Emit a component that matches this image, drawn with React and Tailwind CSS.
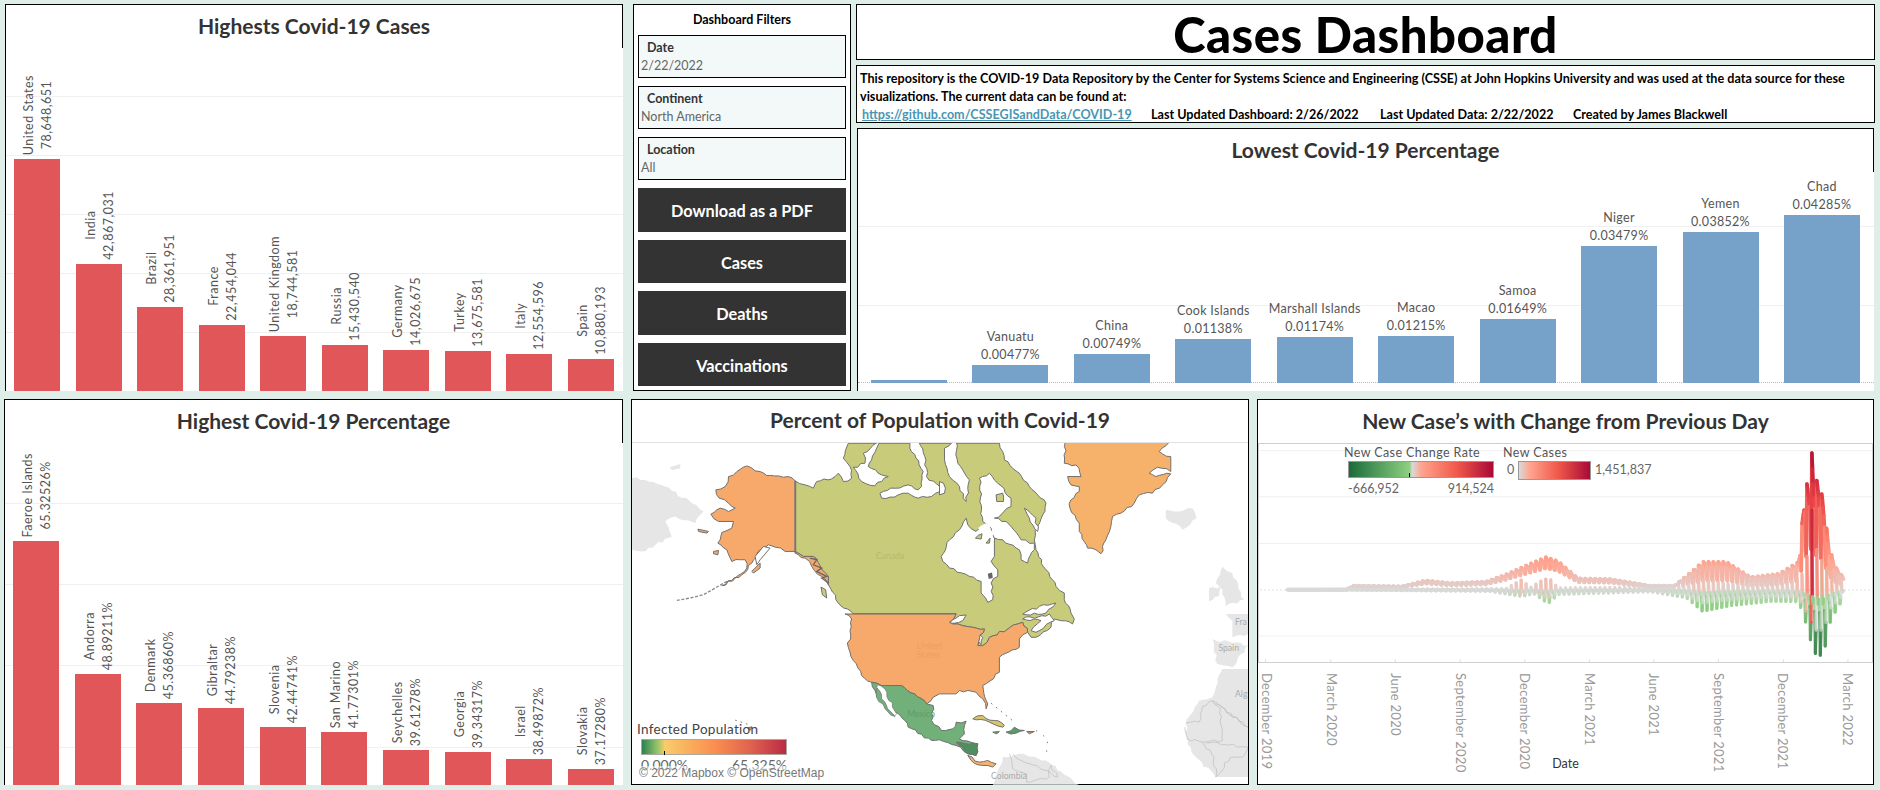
const topCases = [
  ["United States", "78,648,651", 232],
  ["India", "42,867,031", 127],
  ["Brazil", "28,361,951", 84],
  ["France", "22,454,044", 66],
  ["United Kingdom", "18,744,581", 55],
  ["Russia", "15,430,540", 46],
  ["Germany", "14,026,675", 41],
  ["Turkey", "13,675,581", 40],
  ["Italy", "12,554,596", 37],
  ["Spain", "10,880,193", 32],
];

const topPercent = [
  ["Faeroe Islands", "65.32526%", 244],
  ["Andorra", "48.89211%", 111],
  ["Denmark", "45.36860%", 82],
  ["Gibraltar", "44.79238%", 77],
  ["Slovenia", "42.44741%", 58],
  ["San Marino", "41.77301%", 53],
  ["Seychelles", "39.61278%", 35],
  ["Georgia", "39.34317%", 33],
  ["Israel", "38.49872%", 26],
  ["Slovakia", "37.17280%", 16],
];

const lowPercent = [
  ["", "", 3],
  ["Vanuatu", "0.00477%", 18],
  ["China", "0.00749%", 29],
  ["Cook Islands", "0.01138%", 44],
  ["Marshall Islands", "0.01174%", 46],
  ["Macao", "0.01215%", 47],
  ["Samoa", "0.01649%", 64],
  ["Niger", "0.03479%", 137],
  ["Yemen", "0.03852%", 151],
  ["Chad", "0.04285%", 168],
];

const axisLabels = [
  "December 2019", "March 2020", "June 2020", "September 2020", "December 2020",
  "March 2021", "June 2021", "September 2021", "December 2021", "March 2022",
];

const font = "font-['Lato','Noto_Sans',sans-serif]";

function Grid({ lines }) {
  return lines.map((y) => (
    <div key={y} className="absolute left-0 right-0 h-px bg-[#f0f0f0]" style={{ top: y }} />
  ));
}

function RedChart({ rows, lines, height, left }) {
  return (
    <div className={`relative flex items-end justify-between pr-[9px] ${left}`} style={{ height }}>
      <Grid lines={lines} />
      {rows.map(([name, value, h]) => (
        <div key={name} className="relative flex w-[46px] flex-col items-center">
          <div className="mb-[4px] ml-[2px] rotate-180 whitespace-nowrap text-center text-[12.5px] leading-[18px] tracking-[0.5px] text-[#555] [writing-mode:vertical-rl]">
            <div>{name}</div>
            <div>{value}</div>
          </div>
          <div className="w-full bg-[#e15759]" style={{ height: h }} />
        </div>
      ))}
    </div>
  );
}

// break long coast edges into small wobbly steps, straight borders stay straight
function coast(s) {
  const pts = s.split(" ").map((p) => p.split(",").map(Number));
  const out = [];
  pts.forEach(([x, y], i) => {
    const [nx, ny] = pts[(i + 1) % pts.length];
    out.push(`${x},${y}`);
    const dx = nx - x;
    const dy = ny - y;
    if (dx === 0 || dy === 0) return;
    const len = Math.hypot(dx, dy);
    const n = Math.floor(len / 11);
    for (let k = 1; k < n; k++) {
      const h = Math.sin((x + k) * 12.9898 + (y + k) * 78.233) * 43758.5453;
      const w = (h - Math.floor(h) - 0.5) * 9;
      out.push(`${(x + (dx * k) / n - (dy / len) * w).toFixed(1)},${(y + (dy * k) / n + (dx / len) * w).toFixed(1)}`);
    }
  });
  return out.join(" ");
}

// map outlines are traced in 3x pixels, one [dx, dy, points] per zoom crop
function poly(parts) {
  return coast(
    parts
      .map(([dx, dy, s]) =>
        s
          .split(" ")
          .map((p) => {
            const [x, y] = p.split(",").map(Number);
            return `${x + dx},${y + dy}`;
          })
          .join(" ")
      )
      .join(" ")
  );
}

const R = 924;
const D = 513;

function NorthAmerica() {
  const land = { stroke: "#6f6f6f", strokeWidth: 3, strokeLinejoin: "round" };
  const water = { fill: "#fff", ...land };
  const gray = { fill: "#e6e6e6" };
  return (
    <svg viewBox="0 0 1851 1026" className="block h-[342px] w-full">
      {/* grey land outside the selection */}
      <polygon {...gray} points={coast("0,105 40,110 100,130 180,180 215,205 190,240 130,220 100,235 120,280 30,325 0,320")} />
      <polygon {...gray} points="113,72 145,62 145,75 120,80" />
      <polygon {...gray} points={poly([[R, 0, "680,200 720,205 760,195 772,225 730,260 680,225"]])} />
      <polygon {...gray} points={poly([[R, 0, "850,370 880,390 915,470 860,490 850,440 830,420"]])} />
      <polygon {...gray} points={poly([[R, 0, "810,435 845,430 840,460 810,475"]])} />
      <polygon {...gray} points={poly([[R, D, "860,0 927,0 927,60 880,70 880,20"]])} />
      <polygon {...gray} points={poly([[R, D, "820,75 927,95 880,160 835,150"]])} />
      <polygon {...gray} points={poly([[R, D, "850,165 927,165 927,490 830,490 770,430 745,380 740,330 780,260 820,250"]])} />
      <polygon {...gray} points={poly([[R, D, "160,513 190,430 240,420 320,440 420,513"]])} />
      <polyline fill="none" stroke="#bbb" strokeWidth="2" points={poly([[R, D, "740,328 780,325 790,278 820,260 845,285 850,380 790,385 745,375"]])} />
      <polyline fill="none" stroke="#bbb" strokeWidth="2" points={poly([[R, D, "820,262 927,340"]])} />
      <polyline fill="none" stroke="#bbb" strokeWidth="2" points={poly([[R, D, "790,385 825,430 830,490 875,430 910,430 927,400"]])} />
      <polyline fill="none" stroke="#bbb" strokeWidth="2" points={poly([[R, D, "210,420 220,465 262,480 262,505 330,490 335,455 355,490"]])} />

      {/* Canada */}
      <polygon
        fill="#c8cb7a"
        {...land}
        points={poly([
          [0, 0, "490,113 520,125 545,135 555,115 610,100 620,90 635,115 660,105 655,70 635,45 650,0"],
          [R, 0, "180,0 195,50 240,90 270,130 320,180 310,215 295,250 285,290 290,320 320,380 350,430 375,450 375,470 395,510"],
          [R, D, "405,15 400,30 345,15 335,40 290,70 275,70 265,55 250,25 235,30 150,70 130,95 115,95 120,75 135,45 100,40 70,35 40,30 30,25 50,0"],
          [0, 0, "665,513 620,480 590,425 590,400 545,340 515,340 490,325"],
        ])}
      />
      {/* Arctic channels, Hudson Bay, Great Lakes */}
      <polygon {...water} points={coast("665,72 700,60 695,30 745,-5 720,50 710,70 750,95 770,100 730,128 690,115")} />
      <polygon {...water} points={coast("745,150 790,135 830,125 860,140 870,130 875,85 835,15 835,-5 862,-5 880,40 885,100 925,130 925,145 900,160 860,165 830,150 800,155 750,165")} />
      <polygon {...water} points={poly([[R, 0, "15,15 40,-5 50,-5 55,60 90,110 80,175 60,130 30,100 15,50"]])} />
      <polygon {...water} points={poly([[R, 0, "5,340 30,290 60,260 80,225 85,245 110,265 130,250 160,270 165,300 165,340 155,355 175,380 175,400 155,420 160,470 145,478 125,450 125,415 90,400 30,375 10,355"]])} />
      <polygon {...water} points={poly([[R, 0, "130,235 120,105 150,90 175,120 215,165 215,190 185,215 165,225 200,235 245,290 285,300 285,320 265,360 245,350 240,320 190,290 165,285 155,255"]])} />
      <polygon fill="#fff" points={poly([[R, 0, "115,255 140,240 165,270 150,290"]])} />
      <polygon {...water} points={poly([[R, 0, "255,195 290,225 295,265 270,225"]])} />
      <polygon {...water} points={poly([[R, 0, "0,115 12,120 15,150 0,155"]])} />
      <polygon {...water} points={poly([[R, D, "30,28 60,5 80,3 70,20"]])} />
      <polygon {...water} points={poly([[R, D, "70,95 72,60 105,40 130,70 125,92 115,80 110,60 90,55"]])} />
      <polygon {...water} points={poly([[R, 0, "250,513 300,490 350,480 320,510"]])} />
      <polygon {...water} points={poly([[R, D, "250,15 330,0 345,20 290,55 275,50 305,20"]])} />
      <polygon fill="#c8cb7a" {...land} points={poly([[R, 0, "170,155 190,150 192,175 172,175"]])} />
      <polygon fill="#c8cb7a" {...land} points={poly([[R, 0, "108,285 128,272 125,288"]])} />
      <polygon fill="#c8cb7a" {...land} points={poly([[R, 0, "140,300 152,285 150,300"]])} />
      <polygon fill="#666" points={poly([[R, 0, "145,392 158,388 160,405 148,408"]])} />

      {/* Alaska */}
      <polygon
        fill="#f6a96a"
        {...land}
        points={coast("490,113 470,100 440,98 405,97 385,85 345,68 315,85 290,100 280,130 252,140 262,165 290,180 310,195 290,205 265,195 237,213 260,235 305,235 300,255 270,268 258,300 285,320 300,355 340,350 345,375 310,405 270,428 300,412 330,395 360,360 385,320 410,305 430,312 460,325 490,325 515,340 545,340 590,400 590,425 570,400 540,370 520,345 490,330")}
      />
      <line x1="491" y1="113" x2="491" y2="328" stroke="#777" strokeWidth="5" />
      <line x1="665" y1="513" x2="974" y2="513" stroke="#777" strokeWidth="4" />
      <polyline fill="none" stroke="#8a8a8a" strokeWidth="4" strokeDasharray="9 5" points="285,415 250,435 215,455 175,465 135,472" />
      <polygon fill="#f6a96a" {...land} points="198,258 230,265 225,270 200,265" />
      <polygon fill="#f6a96a" {...land} points="245,325 260,322 258,335 245,332" />
      <polygon fill="#f6a96a" {...land} points="360,385 385,360 385,375 365,390" />
      <polyline fill="none" stroke="#666" strokeWidth="4" points="535,345 555,350 545,365 570,375 555,385 585,400 570,405 590,420" />
      <polygon fill="#c8cb7a" {...land} points="568,432 582,440 585,465 572,455" />
      <polygon {...water} points="370,340 395,310 415,315 385,350 375,365" />

      {/* Greenland */}
      <polygon
        fill="#f6b26b"
        {...land}
        points={poly([[R, 0, "378,-3 375,60 410,65 425,100 385,100 395,125 420,130 420,145 395,170 392,195 420,240 420,265 445,315 470,320 485,332 500,290 515,250 520,220 545,210 585,180 600,155 640,150 670,125 695,92 650,100 630,90 655,72 695,85 695,40 660,25 690,-3"]])}
      />

      {/* United States */}
      <polygon
        fill="#f6a96a"
        {...land}
        points={poly([
          [0, D, "640,0 660,15 655,50 650,100 665,140 690,185 720,205 750,215 810,215 850,240 885,270 905,250"],
          [R, D, "0,240 50,240 60,230 110,235 130,255 140,285 145,270 130,215 180,175 180,130 240,100 240,75 265,55 250,25 235,30 150,70 130,95 115,95 120,75 135,45 100,40 70,35 40,30 30,25 50,0"],
        ])}
      />

      {/* Mexico and the Caribbean */}
      <polygon
        fill="#72b07a"
        {...land}
        points={poly([
          [0, D, "720,205 750,215 810,215 850,240 885,270 905,275 900,320 930,350"],
          [R, D, "5,350 40,345 50,325 80,322 75,360 60,375 115,390 110,425 85,420 50,395 0,378"],
          [0, D, "900,380 830,340 820,320 760,270 730,230"],
        ])}
      />
      <polygon {...water} strokeWidth="2" points={poly([[0, D, "738,212 760,225 795,300 790,306 768,285 735,250"]])} />
      <polygon fill="#72b07a" {...land} strokeWidth="2" points={poly([[0, D, "736,222 768,285 790,308 760,285 735,250"]])} />
      <polygon fill="#4f8f5f" {...land} points={poly([[R, D, "50,385 115,390 110,425 85,420"]])} />
      <polygon fill="#f6b26b" {...land} points={poly([[R, D, "85,425 120,445 145,440 170,450 160,460 130,455 95,440"]])} />
      <polygon fill="#d8c56c" {...land} points={poly([[R, D, "100,315 130,305 165,320 195,335 190,340 150,325 110,318"]])} />
      <polygon fill="#5a9a68" {...land} points={poly([[R, D, "200,355 225,340 255,350 230,358"]])} />
      <polygon fill="#5a9a68" {...land} points={poly([[R, D, "160,355 180,353 172,360"]])} />
      <polygon fill="#c98a5a" {...land} points={poly([[R, D, "262,353 285,353 270,360"]])} />
      <polygon fill="#f6a96a" {...land} points="348,855 360,852 356,862" />
      <polyline fill="none" stroke="#777" strokeWidth="3" strokeDasharray="5 12" points="310,832 350,845" />
      <polyline fill="none" stroke="#777" strokeWidth="3" strokeDasharray="5 14" points={`${R + 155},${D + 268} ${R + 225},${D + 325}`} />
      <polyline fill="none" stroke="#777" strokeWidth="3" strokeDasharray="4 22" points={`${R + 290},${D + 350} ${R + 325},${D + 375} ${R + 320},${D + 435}`} />

      {/* place names on the map */}
      <g className="font-['Lato',sans-serif]" fontSize="26">
        <text x="733" y="349" fill="#b6ba6c">Canada</text>
        <text x="856" y="618" fill="#ec9f66">United</text>
        <text x="856" y="645" fill="#ec9f66">States</text>
        <text x="827" y="823" fill="#5f9c68">Mexico</text>
        <text x={R + 888} y={D + 33} fill="#aaa">Fra</text>
        <text x={R + 838} y={D + 112} fill="#aaa">Spain</text>
        <text x={R + 888} y={D + 250} fill="#aaa">Alg</text>
        <text x={R + 155} y={D + 497} fill="#aaa">Colombia</text>
      </g>
    </svg>
  );
}

// piecewise linear envelope
function envelope(points, x) {
  for (let i = 1; i < points.length; i++) {
    if (x <= points[i][0]) {
      const [x0, y0] = points[i - 1];
      const [x1, y1] = points[i];
      return y0 + ((y1 - y0) * (x - x0)) / (x1 - x0);
    }
  }
  return points[points.length - 1][1];
}

function mix(stops, t) {
  const v = Math.min(1, Math.max(0, t));
  for (let i = 1; i < stops.length; i++) {
    if (v <= stops[i][0]) {
      const [t0, c0] = stops[i - 1];
      const [t1, c1] = stops[i];
      const k = (v - t0) / (t1 - t0);
      return `rgb(${c0.map((c, j) => Math.round(c + (c1[j] - c) * k)).join(",")})`;
    }
  }
  return "#000";
}

const redStops = [
  [0, [217, 217, 217]],
  [0.08, [240, 190, 180]],
  [0.18, [255, 165, 145]],
  [0.35, [250, 130, 110]],
  [0.62, [232, 66, 70]],
  [1, [168, 10, 54]],
];
const greenStops = [
  [0, [217, 217, 217]],
  [0.22, [142, 208, 128]],
  [0.5, [105, 175, 105]],
  [1, [26, 107, 58]],
];

const casesEnv = [[95, 0], [240, 0], [260, 12], [380, 10], [440, 28], [500, 20], [590, 24], [640, 46], [700, 78], [740, 98], [770, 86], [820, 34], [900, 32], [1000, 12], [1060, 12], [1110, 62], [1130, 84], [1190, 84], [1250, 38], [1320, 48], [1370, 84], [1385, 290], [1391, 320], [1397, 300], [1403, 412], [1409, 300], [1415.5, 330], [1430, 280], [1445, 135], [1460, 72], [1482, 36]];
const dropEnv = [[95, 0], [240, 1], [600, 5], [680, 20], [710, 12], [745, 42], [770, 14], [1000, 6], [1090, 24], [1130, 65], [1200, 48], [1300, 35], [1370, 36], [1388, 100], [1405, 175], [1415, 200], [1432, 195], [1450, 90], [1482, 25]];
const riseEnv = [[95, 0], [640, 3], [680, 30], [700, 5], [735, 32], [750, 32], [770, 5], [1090, 8], [1115, 35], [1200, 15], [1350, 20], [1388, 55], [1399, 240], [1407, 240], [1416, 110], [1440, 65], [1482, 15]];
const shallow = [1, 0.96, 0.92, 0.88, 0.82, 0.68, 0.66];
const deep = [1, 0.96, 0.92, 0.88, 0.8, 0.38, 0.32];
const dips = [0.5, -0.12, -0.22, -0.15, -0.35, -1, -0.62];

function TrendLines() {
  const days = 790;
  const xAt = (d) => 95 + (d * 1387) / days;
  const cases = [];
  const change = [];
  for (let d = 0; d <= days; d++) {
    const x = xAt(d);
    const k = (d + 4) % 7;
    const week = x > 1080 ? deep : shallow;
    cases.push(envelope(casesEnv, x) * week[k]);
    change.push(dips[k] > 0 ? envelope(riseEnv, x) : envelope(dropEnv, x) * dips[k]);
  }
  const segs = [];
  for (let d = 1; d <= days; d++) {
    segs.push(
      <line key={"c" + d} x1={xAt(d - 1)} x2={xAt(d)} y1={600 - cases[d - 1]} y2={600 - cases[d]}
        stroke={mix(redStops, (cases[d] + cases[d - 1]) / 2 / 430)} strokeWidth="3.6" strokeLinecap="round" vectorEffect="non-scaling-stroke" />
    );
  }
  for (let d = 1; d <= days; d++) {
    const v = (change[d] + change[d - 1]) / 2;
    segs.push(
      <line key={"g" + d} x1={xAt(d - 1)} x2={xAt(d)} y1={600 - change[d - 1]} y2={600 - change[d]}
        stroke={v >= 0 ? mix(redStops, v / 130) : mix(greenStops, -v / 190)} strokeWidth="3.2" strokeLinecap="round" strokeOpacity="0.8" vectorEffect="non-scaling-stroke" />
    );
  }
  return segs;
}

function CasesTrend() {
  const ticks = [40, 203, 364, 526, 687, 848, 1009, 1170, 1332, 1493];
  return (
    <div className="relative h-[220px] border-y border-x border-[#cfcfcf]">
      <svg viewBox="24 161 1529 657" preserveAspectRatio="none" className="block h-full w-full">
        {[181, 320, 461, 740].map((y) => (
          <line key={y} x1="24" x2="1553" y1={y} y2={y} stroke="#f0f0f0" strokeWidth="1" vectorEffect="non-scaling-stroke" />
        ))}
        <line x1="28" x2="1553" y1="601" y2="601" stroke="#bbb" strokeWidth="1" strokeDasharray="1 3" vectorEffect="non-scaling-stroke" />
        {ticks.map((x) => (
          <line key={x} x1={x} x2={x} y1="810" y2="818" stroke="#ddd" strokeWidth="1" vectorEffect="non-scaling-stroke" />
        ))}
        <TrendLines />
      </svg>

      {/* colour legends sit on the plot */}
      <div className="absolute left-[85px] top-0 w-[150px] text-[12.5px] text-[#555]">
        <div className="h-[17px] pt-px leading-[16px] tracking-[0.4px] whitespace-nowrap">New Case Change Rate</div>
        <div className="relative ml-1 h-[17px] w-[146px] border border-[#999] bg-[linear-gradient(to_right,#1a6b3a,#8ed080_42%,#d9d9d9_44%,#ffa590_50%,#f0584a_75%,#a80a36)]">
          <div className="absolute bottom-0 left-[60px] h-[4px] w-px bg-black" />
        </div>
        <div className="ml-1 flex w-[146px] justify-between leading-[21px] text-[#666]">
          <span>-666,952</span>
          <span>914,524</span>
        </div>
      </div>
      <div className="absolute left-[244px] top-0 text-[12.5px] text-[#555]">
        <div className="h-[17px] pt-px leading-[16px] tracking-[0.4px]">New Cases</div>
        <div className="flex items-center text-[#666]">
          <span className="ml-[4px] w-[11px]">0</span>
          <div className="h-[19px] w-[73px] border border-[#999] bg-[linear-gradient(to_right,#d9d9d9,#ffa590_15%,#f0584a_55%,#a80a36)]" />
          <span className="ml-1">1,451,837</span>
        </div>
      </div>
    </div>
  );
}

export default function App() {
  return (
    <div className={`flex h-[790px] w-[1880px] flex-col gap-2 overflow-hidden bg-[#e0eeea] pt-1 ${font}`}>
      <div className="flex h-[387px] pl-[5px]">
        {/* top left */}
        <div className="w-[618px] border-l border-black bg-white">
          <div className="flex h-[44px] items-center justify-center border-r border-t border-black pb-[2px] text-[21px] font-bold text-[#333]">
            Highests Covid-19 Cases
          </div>
          <RedChart rows={topCases} lines={[48, 107, 166, 225, 284]} height={343} left="pl-2" />
        </div>

        {/* filters */}
        <div className="ml-[10px] flex w-[218px] flex-col border border-black bg-white px-1">
          <div className="flex h-[30px] items-center justify-center text-[12.5px] font-bold text-black">Dashboard Filters</div>
          <div className="flex flex-col gap-2">
            {[
              ["Date", "2/22/2022"],
              ["Continent", "North America"],
              ["Location", "All"],
            ].map(([label, value]) => (
              <div key={label} className="flex h-[43px] flex-col justify-center border border-black bg-[#f3f9f8] pl-[2px] text-[12.5px]">
                <div className="pl-[6px] leading-[18px] font-bold text-[#333]">{label}</div>
                <div className="leading-[18px] text-[#666]">{value}</div>
              </div>
            ))}
            {["Download as a PDF", "Cases", "Deaths", "Vaccinations"].map((label) => (
              <div key={label} className="flex h-[43.5px] items-center justify-center bg-[#333] pt-[3px] text-[16.3px] font-bold text-white">
                {label}
              </div>
            ))}
          </div>
        </div>

        {/* header and lowest chart */}
        <div className="ml-[5px] flex w-[1019px] flex-col">
          <div className="flex h-[56px] items-center justify-center border border-black bg-white pt-[5px] text-[49px] font-black tracking-[0.5px] text-black">
            Cases Dashboard
          </div>
          <div className="mt-[5px] h-[58px] whitespace-nowrap border border-black bg-white pl-[3px] pt-[4px] text-[12.6px] leading-[18px] font-bold text-black">
            <div>
              This repository is the COVID-19 Data Repository by the Center for Systems Science and Engineering (CSSE) at John Hopkins University and was used at the data source for these
              <br />
              visualizations. The current data can be found at:
            </div>
            <div className="flex">
              <a className="ml-[2px] w-[289px] text-[#4996b2] underline">https://github.com/CSSEGISandData/COVID-19</a>
              <span className="w-[229px]">Last Updated Dashboard: 2/26/2022</span>
              <span className="w-[193px]">Last Updated Data: 2/22/2022</span>
              <span>Created by James Blackwell</span>
            </div>
          </div>
          <div className="mx-[1px] mt-[5px] flex h-[263px] flex-col border-l border-black bg-white">
            <div className="flex h-[44px] shrink-0 items-center justify-center border-r border-t border-black pb-[2px] text-[21px] font-bold text-[#333]">
              Lowest Covid-19 Percentage
            </div>
            <div className="relative flex h-[219px] items-end justify-between pl-[13px] pr-[14px] pb-2">
              <Grid lines={[54, 133]} />
              <div className="absolute bottom-2 left-0 right-0 border-b border-dotted border-[#bbb]" />
              {lowPercent.map(([name, value, h]) => (
                <div key={value + h} className="relative flex w-[76px] flex-col items-center">
                  {name && (
                    <div className="mb-px whitespace-nowrap text-center text-[12.5px] leading-[18px] tracking-[0.3px] text-[#555]">
                      <div>{name}</div>
                      <div>{value}</div>
                    </div>
                  )}
                  <div className="w-full bg-[#76a1c8]" style={{ height: h }} />
                </div>
              ))}
            </div>
          </div>
        </div>
      </div>

      <div className="flex h-[386px] pl-1">
        {/* bottom left */}
        <div className="w-[619px] border-l border-black bg-white">
          <div className="flex h-[44px] items-center justify-center border-r border-t border-black pb-[2px] text-[21px] font-bold text-[#333]">
            Highest Covid-19 Percentage
          </div>
          <RedChart rows={topPercent} lines={[60, 141, 222, 304]} height={342} left="pl-2" />
        </div>

        {/* map */}
        <div className="relative ml-2 w-[618px] border border-black bg-white">
          <div className="flex h-[43px] items-center justify-center border-b border-[#e2e2e2] pb-[2px] text-[21px] font-bold text-[#333]">
            Percent of Population with Covid-19
          </div>
          <NorthAmerica />
          <div className="absolute bottom-[9px] left-[5px] w-[150px]">
            <div className="text-[13.5px] leading-[18px] tracking-[0.3px] text-[#444]">Infected Population</div>
            <div className="relative ml-[4px] mt-[1px] h-[16px] w-[146px] border border-[#a9a99f] bg-[linear-gradient(to_right,#2e8050,#8cc06a_10%,#f9cc6a_16%,#fa8f50_50%,#e0634f_75%,#bb2b45)]">
              <div className="absolute bottom-[-1px] left-[22px] h-[4px] w-px bg-black" />
            </div>
            <div className="ml-[4px] flex w-[146px] justify-between text-[14px] leading-[20px] text-[#666]">
              <span>0.000%</span>
              <span>65.325%</span>
            </div>
          </div>
          <div className="absolute bottom-[3px] left-[4px] bg-white/50 px-[3px] font-['Liberation_Sans',sans-serif] text-[12px] leading-[15px] text-[#777]">
            © 2022 Mapbox © OpenStreetMap
          </div>
        </div>

        {/* trend */}
        <div className="ml-2 w-[617px] border border-black bg-white">
          <div className="flex h-[43px] items-center justify-center pb-[2px] text-[21px] font-bold text-[#333]">
            New Case’s with Change from Previous Day
          </div>
          <CasesTrend />
          <div className="flex h-[93px] justify-between pl-[1px] pr-[17px] pt-[10px]">
            {axisLabels.map((label) => (
              <div key={label} className="w-4 whitespace-nowrap text-[13px] leading-4 tracking-[0.3px] text-[#999] [writing-mode:vertical-rl]">
                {label}
              </div>
            ))}
          </div>
          <div className="text-center text-[12.5px] leading-4 text-[#333]">Date</div>
        </div>
      </div>
    </div>
  );
}
